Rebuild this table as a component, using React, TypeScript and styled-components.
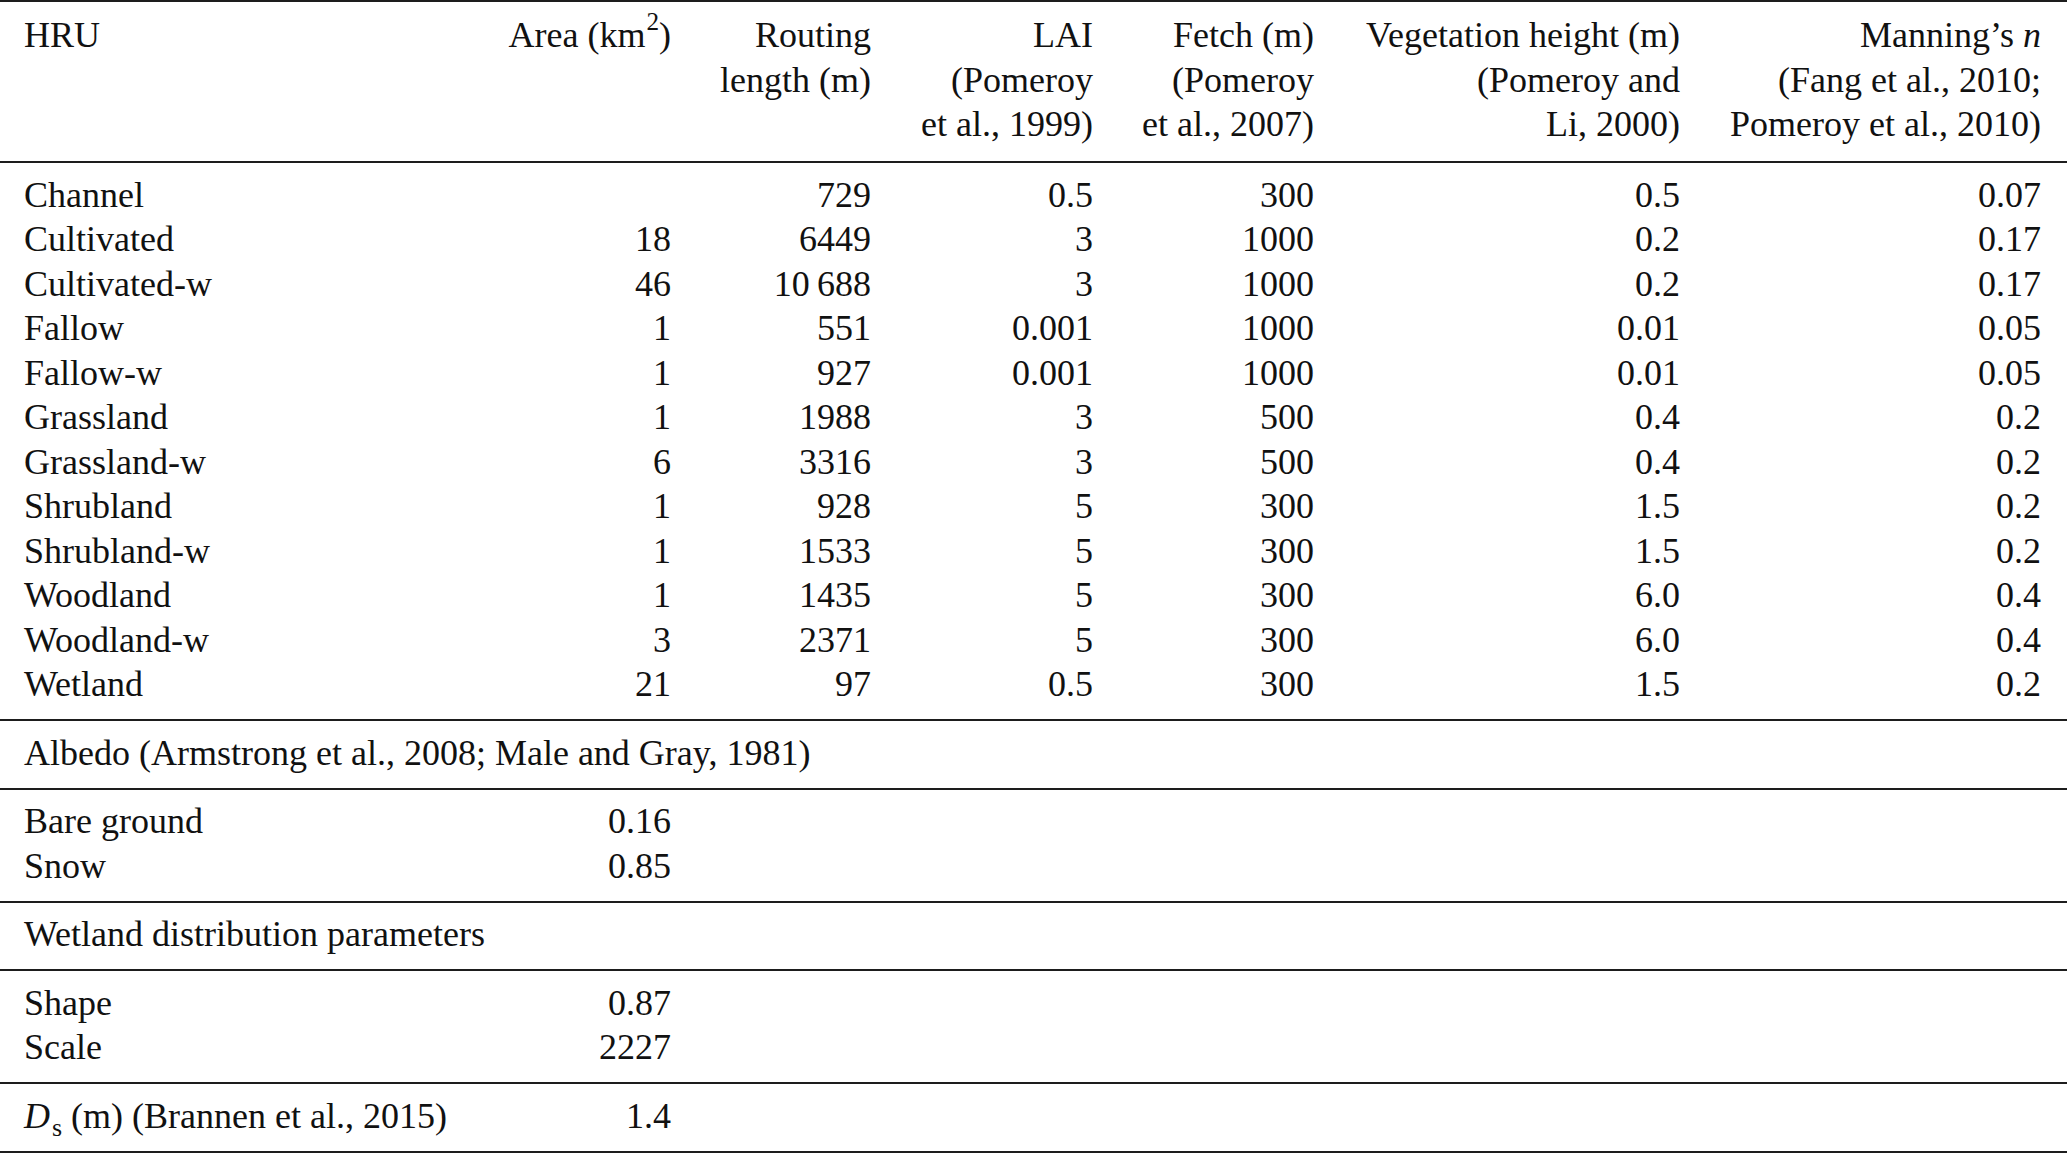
import { FC } from 'react'
import styled, { createGlobalStyle } from 'styled-components'

type Row = [string, string, string, string, string, string, string]

const hruRows: Row[] = [
  ['Channel', '', '729', '0.5', '300', '0.5', '0.07'],
  ['Cultivated', '18', '6449', '3', '1000', '0.2', '0.17'],
  ['Cultivated-w', '46', '10\u2009688', '3', '1000', '0.2', '0.17'],
  ['Fallow', '1', '551', '0.001', '1000', '0.01', '0.05'],
  ['Fallow-w', '1', '927', '0.001', '1000', '0.01', '0.05'],
  ['Grassland', '1', '1988', '3', '500', '0.4', '0.2'],
  ['Grassland-w', '6', '3316', '3', '500', '0.4', '0.2'],
  ['Shrubland', '1', '928', '5', '300', '1.5', '0.2'],
  ['Shrubland-w', '1', '1533', '5', '300', '1.5', '0.2'],
  ['Woodland', '1', '1435', '5', '300', '6.0', '0.4'],
  ['Woodland-w', '3', '2371', '5', '300', '6.0', '0.4'],
  ['Wetland', '21', '97', '0.5', '300', '1.5', '0.2'],
]

const GlobalStyle = createGlobalStyle`
  html, body {
    margin: 0;
    padding: 0;
    background: #fff;
  }
`

const Table = styled.div`
  width: 100%;
  border-bottom: 2px solid #1d1d1d;
  font-family: 'Liberation Serif', 'Times New Roman', serif;
  font-size: 36px;
  color: #111;
`

// HRU | Area | Routing | LAI | Fetch | Vegetation height | Manning's n
const Section = styled.div<{ $head?: boolean }>`
  display: grid;
  grid-template-columns: 447px 200px 200px 222px 221px 366px 361px;
  line-height: 44.5px;
  border-top: 2px solid #1d1d1d;
  padding: ${p => (p.$head ? '11px 26px 14.5px 24px' : '9.5px 26px 12.5px 24px')};
`

const Label = styled.div<{ $span?: boolean }>`
  grid-column: ${p => (p.$span ? '1 / -1' : '1')};
  white-space: nowrap;
  text-align: left;
`

const Value = styled.div`
  white-space: nowrap;
  text-align: right;
`

const Sup = styled.sup`
  font-size: 0.7em;
  line-height: 0;
  position: relative;
  top: -0.17em;
  margin-left: 1px;
`

const Sub = styled.sub`
  font-size: 0.72em;
  line-height: 0;
  position: relative;
  top: 0.02em;
  margin-left: 2px;
`

const DataRow: FC<{ row: Row }> = ({ row }) => {
  const [name, ...values] = row
  return (
    <>
      <Label>{name}</Label>
      {values.map((value, i) => (
        <Value key={i}>{value}</Value>
      ))}
    </>
  )
}

const App: FC = () => {
  return (
    <Table>
      <GlobalStyle />
      <Section $head>
        <Label>HRU</Label>
        <Value>
          Area (km<Sup>2</Sup>)
        </Value>
        <Value>
          Routing
          <br />
          length (m)
        </Value>
        <Value>
          LAI
          <br />
          (Pomeroy
          <br />
          et al., 1999)
        </Value>
        <Value>
          Fetch (m)
          <br />
          (Pomeroy
          <br />
          et al., 2007)
        </Value>
        <Value>
          Vegetation height (m)
          <br />
          (Pomeroy and
          <br />
          Li, 2000)
        </Value>
        <Value>
          Manning’s <i>n</i>
          <br />
          (Fang et al., 2010;
          <br />
          Pomeroy et al., 2010)
        </Value>
      </Section>

      <Section>
        {hruRows.map(row => (
          <DataRow key={row[0]} row={row} />
        ))}
      </Section>

      <Section>
        <Label $span>Albedo (Armstrong et al., 2008; Male and Gray, 1981)</Label>
      </Section>

      <Section>
        <Label>Bare ground</Label>
        <Value>0.16</Value>
        <Label>Snow</Label>
        <Value>0.85</Value>
      </Section>

      <Section>
        <Label $span>Wetland distribution parameters</Label>
      </Section>

      <Section>
        <Label>Shape</Label>
        <Value>0.87</Value>
        <Label>Scale</Label>
        <Value>2227</Value>
      </Section>

      <Section>
        <Label>
          <i>D</i>
          <Sub>s</Sub> (m) (Brannen et al., 2015)
        </Label>
        <Value>1.4</Value>
      </Section>
    </Table>
  )
}

export default App
